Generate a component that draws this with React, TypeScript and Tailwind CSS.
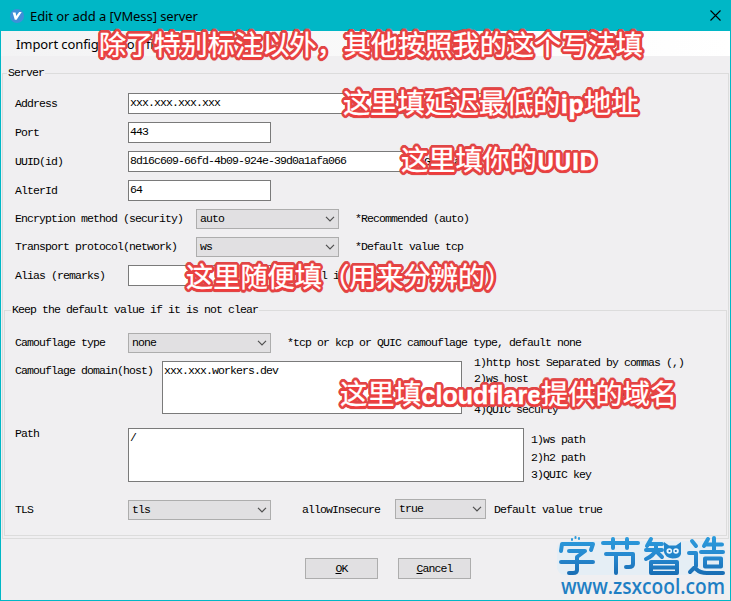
import React from "react";

const mono =
  "font-['Liberation_Mono','Noto_Sans_CJK_SC',monospace] text-[11.5px] tracking-[-0.9px] leading-[12px] whitespace-pre text-black";

function Row({ label, className, children }: { label: string; className: string; children?: React.ReactNode }) {
  return (
    <div className={`flex items-center ${className}`}>
      <span className="w-[113px] shrink-0 overflow-visible">{label}</span>
      {children}
    </div>
  );
}

function Field({ value, className }: { value: string; className: string }) {
  return (
    <div className={`shrink-0 border border-[#7a7a7a] bg-white pl-[1px] pt-[3px] ${className}`}>{value}</div>
  );
}

function Select({ value, className }: { value: string; className: string }) {
  return (
    <div
      className={`flex h-5 shrink-0 items-center justify-between border border-[#adadad] bg-[#e1e0e2] pl-[3px] pr-[3px] ${className}`}
    >
      <span>{value}</span>
      <svg width="10" height="6" viewBox="0 0 10 6" fill="none" stroke="#505050" strokeWidth="1.2">
        <path d="M1 0.8L5 4.8L9 0.8" />
      </svg>
    </div>
  );
}

function Note({ className, children }: { className: string; children: React.ReactNode }) {
  return (
    <div
      className={`absolute whitespace-nowrap font-['Noto_Sans_CJK_SC',sans-serif] text-[27.2px] font-normal leading-[30px] tracking-normal text-white [-webkit-text-stroke:0.3px_#ffffff] [text-shadow:1.5px_0_#f03c3c,-1.5px_0_#f03c3c,0_1.5px_#f03c3c,0_-1.5px_#f03c3c,2.8px_0_#e04646,2.6px_1.1px_#e04646,2px_2px_#e04646,1.1px_2.6px_#e04646,0_2.8px_#e04646,-1.1px_2.6px_#e04646,-2px_2px_#e04646,-2.6px_1.1px_#e04646,-2.8px_0_#e04646,-2.6px_-1.1px_#e04646,-2px_-2px_#e04646,-1.1px_-2.6px_#e04646,0_-2.8px_#e04646,1.1px_-2.6px_#e04646,2px_-2px_#e04646,2.6px_-1.1px_#e04646,0_3px_1px_#b85a5a] ${className}`}
    >
      {children}
    </div>
  );
}

function Watermark() {
  return (
    <div className="absolute left-[555px] top-[533px] h-[66px] w-[174px]">
      <svg width="174" height="66" viewBox="555 533 174 66" fill="none" strokeLinecap="round" strokeLinejoin="round">
        <defs>
          <linearGradient id="ink" gradientUnits="userSpaceOnUse" x1="0" y1="536" x2="0" y2="578">
            <stop offset="0" stopColor="#2b9bdc" />
            <stop offset="0.5" stopColor="#2688cf" />
            <stop offset="1" stopColor="#1768ae" />
          </linearGradient>
        </defs>
        <rect x="557" y="541" width="168" height="34" rx="8" fill="#dcecf8" opacity="0.55" />
        <g stroke="url(#ink)" strokeWidth="4">
          <path d="M561 551L562 544H593L591 550M569 551H585L577 557M561 562H593M577 557V570Q577 573 573 573H569" />
          <path d="M603 543H638M613 539V548M627 539V548M606 554H633V564Q633 567 629 567H626M616 554V573" />
          <path d="M651 539L647 546M650 544H662M646 550H662M656 544V550Q653 556 646 559M657 552L662 557M651 562H677V573H651ZM651 567.5H677" />
          <path d="M692 541L696 546M689 553H696V566L690 572M696 569Q700 573 707 573H723M708 539L704 546M705 544.5H722M714 538V552M701 552H723M705 558.5H721V566.5H705Z" />
        </g>
        <path d="M664 542L669 545.5H676L681 542V554Q680 558.5 672.5 558.5Q665 557.5 664 552Z" fill="#2185cb" />
        <circle cx="669.3" cy="551" r="2.8" fill="#e8f7ff" />
        <circle cx="676" cy="551" r="2.8" fill="#e8f7ff" />
        <circle cx="669.5" cy="551" r="1.1" fill="#1768ae" />
        <circle cx="675.8" cy="551" r="1.1" fill="#1768ae" />
        <path d="M572 540v-1M575.5 538v-1M579 539v-1" stroke="#2b9bdc" strokeWidth="2" />
        <text
          x="561"
          y="594"
          textLength="164"
          lengthAdjust="spacingAndGlyphs"
          letterSpacing="0"
          fontFamily="Open Sans, sans-serif"
          fontSize="21.5"
          fontWeight="600"
          fill="#1f7fc4"
        >
          www.zsxcool.com
        </text>
      </svg>
    </div>
  );
}

export default function App() {
  return (
    <div className={`relative h-[601px] w-[731px] overflow-hidden bg-[#00b7c6] ${mono}`}>
      <header className="flex h-[31px] items-center pl-[10px] pr-[10px] font-['Noto_Sans',sans-serif] text-[13px] tracking-[-0.08px]">
        <svg width="14" height="14" viewBox="0 0 14 14" className="mr-[6px]">
          <circle cx="7" cy="7" r="7" fill="#3f8fd8" />
          <path d="M2.6 3.5L5.6 3.5L6.2 7L9.2 3L11.7 3L6.6 10.8L4.8 10.8Z" fill="#fff" />
        </svg>
        <span className="flex-1">Edit or add a [VMess] server</span>
        <svg width="11" height="11" viewBox="0 0 11 11" stroke="#000" strokeWidth="1.1">
          <path d="M0.5 0.5L10.5 10.5M10.5 0.5L0.5 10.5" />
        </svg>
      </header>
      <main className="mx-px h-[569px] bg-[#f0eff1]">
        <nav className="flex h-[25px] items-center bg-gradient-to-r from-[#f3f3f4] to-white pl-[15px] font-['Noto_Sans',sans-serif] text-[13px] tracking-[-0.08px]">
          Import configuration file
        </nav>
        <fieldset className="mx-px mt-[11px] h-[472px] border border-[#dcdcdc]">
          <legend className="ml-[4px] h-3 px-[1px]">Server</legend>
          <div className="pl-[12px]">
            <Row label="Address" className="mt-[14px] h-[21px]">
              <Field value="xxx.xxx.xxx.xxx" className="h-[21px] w-[356px]" />
            </Row>
            <Row label="Port" className="mt-[8px] h-[21px]">
              <Field value="443" className="h-[21px] w-[143px]" />
            </Row>
            <Row label="UUID(id)" className="mt-[8px] h-[21px]">
              <Field value="8d16c609-66fd-4b09-924e-39d0a1afa066" className="h-[21px] w-[282px]" />
              <span className="ml-[14px]">Generate</span>
            </Row>
            <Row label="AlterId" className="mt-[8px] h-[21px]">
              <Field value="64" className="h-[21px] w-[143px]" />
            </Row>
            <Row label="Encryption method (security)" className="mt-[8px] h-5">
              <Select value="auto" className="ml-[68px] w-[143px]" />
              <span className="ml-[16px]">*Recommended (auto)</span>
            </Row>
            <Row label="Transport protocol(network)" className="mt-[8px] h-5">
              <Select value="ws" className="ml-[68px] w-[143px]" />
              <span className="ml-[16px]">*Default value tcp</span>
            </Row>
            <Row label="Alias (remarks)" className="mt-[8px] h-[21px]">
              <Field value="" className="h-[21px] w-[143px]" />
              <span className="ml-[26px]">*Fill in manually</span>
            </Row>
          </div>
          <fieldset className="mx-px mt-[18px] h-[232px] border border-[#dcdcdc]">
            <legend className="ml-[6px] h-3 px-[1px]">Keep the default value if it is not clear</legend>
            <div className="pl-[10px]">
              <Row label="Camouflage type" className="mt-[17px] h-5">
                <Select value="none" className="w-[143px]" />
                <span className="ml-[16px]">*tcp or kcp or QUIC camouflage type, default none</span>
              </Row>
              <div className="mt-[8px] flex h-[53px]">
                <span className="w-[147px] shrink-0 pt-[4px]">Camouflage domain(host)</span>
                <Field value="xxx.xxx.workers.dev" className="h-[53px] w-[300px]" />
                <div className="-mt-[6px] ml-[12px] leading-[15.5px]">
                  <p>1)http host Separated by commas (,)</p>
                  <p>2)ws host</p>
                  <p>3)h2 host Separated by commas</p>
                  <p>4)QUIC securty</p>
                </div>
              </div>
              <div className="mt-[14px] flex h-[54px]">
                <span className="w-[113px] shrink-0">Path</span>
                <Field value="/" className="h-[54px] w-[396px]" />
                <div className="ml-[7px] mt-[3px] leading-[17.5px]">
                  <p>1)ws path</p>
                  <p>2)h2 path</p>
                  <p>3)QUIC key</p>
                </div>
              </div>
              <Row label="TLS" className="mt-[18px] h-5">
                <Select value="tls" className="w-[143px]" />
                <span className="ml-[31px] w-[93px] shrink-0">allowInsecure</span>
                <Select value="true" className="-mt-[2px] w-[91px]" />
                <span className="ml-[8px]">Default value true</span>
              </Row>
            </div>
          </fieldset>
        </fieldset>
        <footer className="mt-[19px] flex gap-5 pl-[304px]">
          <button className="h-[21px] w-[73px] border border-[#adadad] bg-[#e1e0e2]">
            <u>O</u>K
          </button>
          <button className="h-[21px] w-[73px] border border-[#adadad] bg-[#e1e0e2]">
            <u>C</u>ancel
          </button>
        </footer>
      </main>

      <Note className="left-[99px] top-[28px]">除了特别标注以外，其他按照我的这个写法填</Note>
      <Note className="left-[343px] top-[86px]">
        这里填延迟最低的<b className="font-['Open_Sans',sans-serif] text-[25px]">ip</b>地址
      </Note>
      <Note className="left-[401px] top-[143px]">
        这里填你的<b className="font-['Open_Sans',sans-serif] text-[23px]">UUID</b>
      </Note>
      <Note className="left-[186px] top-[260px]">这里随便填（用来分辨的）</Note>
      <Note className="left-[340px] top-[377px]">
        这里填<b className="font-['Liberation_Sans',sans-serif] text-[25px]">cloudflare</b>提供的域名
      </Note>
      <Watermark />
    </div>
  );
}
